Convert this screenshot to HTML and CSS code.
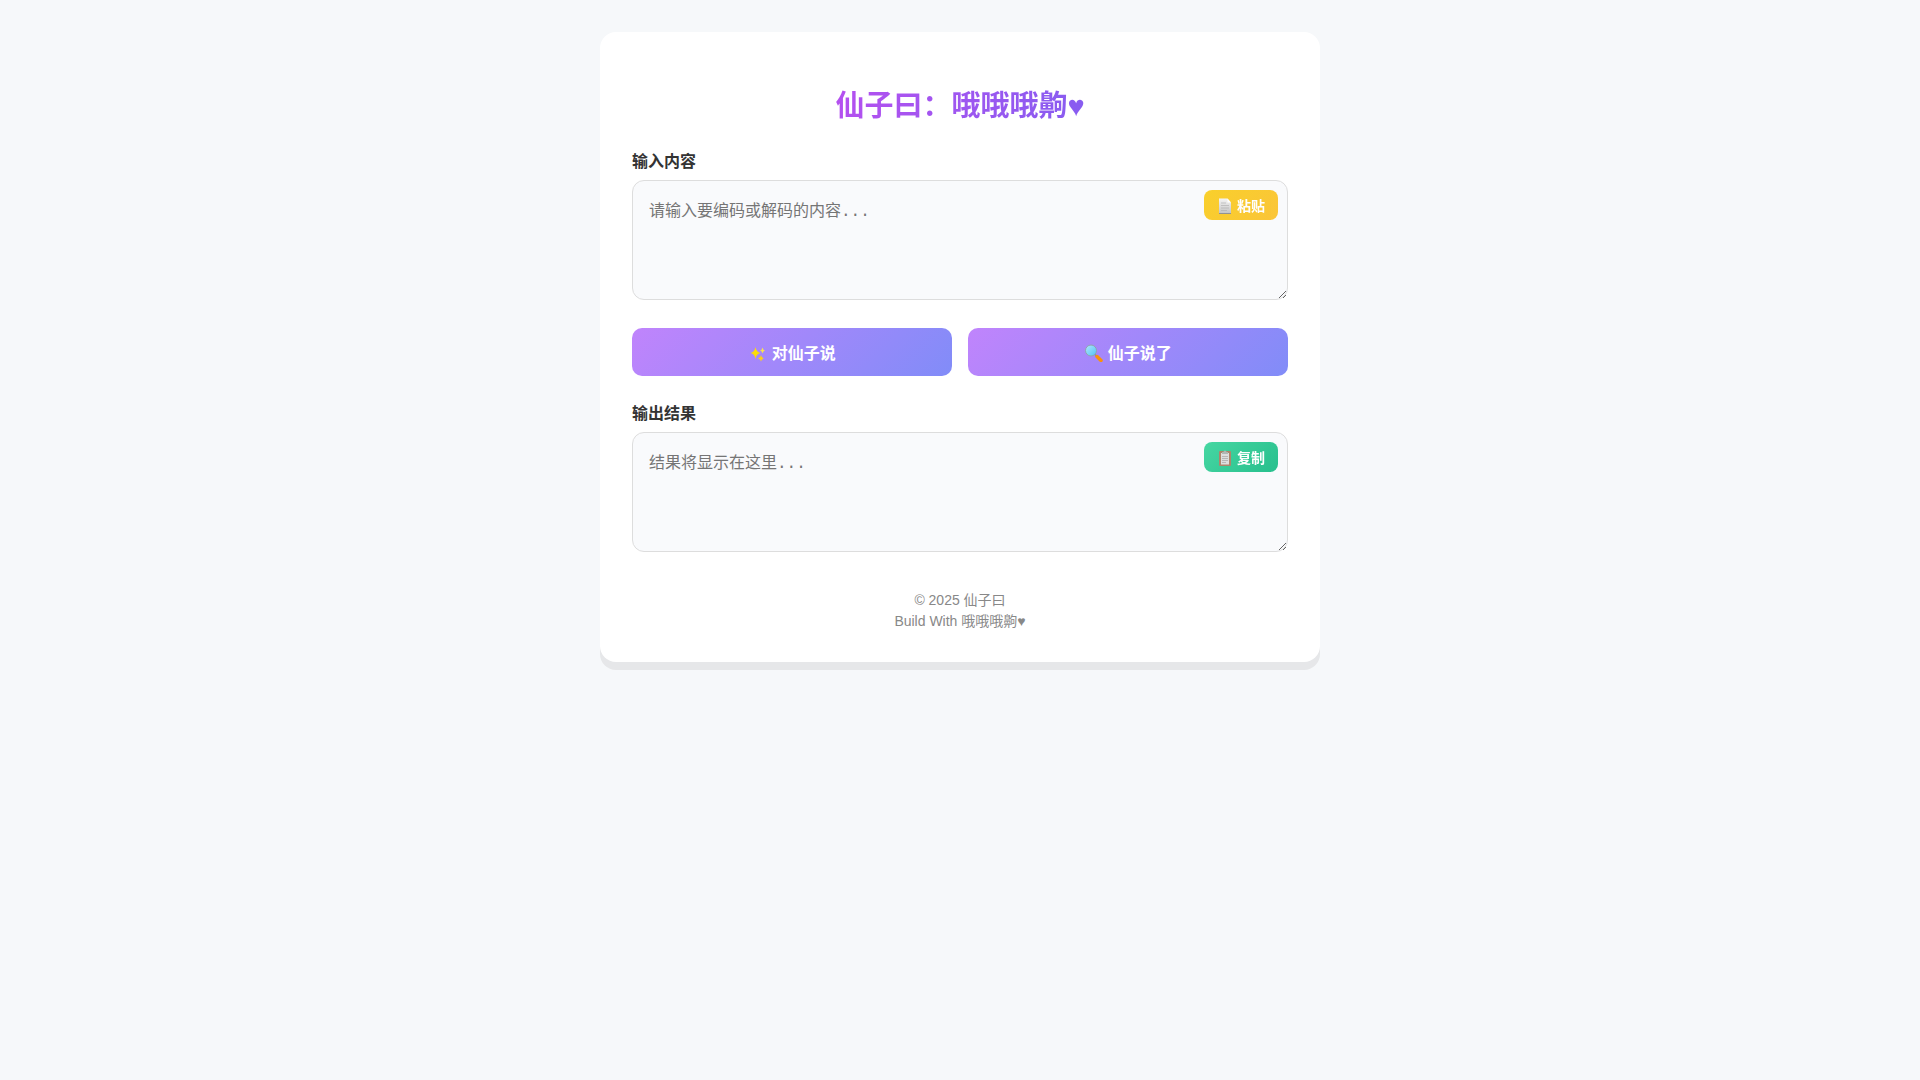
FILE: index.html
```
<!DOCTYPE html>
<html lang="zh-CN">
<head>
    <meta charset="UTF-8">
    <meta name="viewport" content="width=device-width, initial-scale=1.0">
    <title>仙子曰</title>
    <link rel="stylesheet" href="styles.css">
</head>
<body>
    <div class="container">
        <h1>仙子曰：哦哦哦齁♥</h1>

        <label for="inputText">输入内容</label>
        <div class="textarea-wrapper">
            <textarea id="inputText" placeholder="请输入要编码或解码的内容..."></textarea>
            <button class="small-btn paste-btn" type="button">
                <svg class="icon" viewBox="0 0 16 18" aria-hidden="true">
                    <defs>
                        <linearGradient id="page" x1="0" y1="0" x2="0" y2="1">
                            <stop offset="0" stop-color="#f5f5f5"/>
                            <stop offset="1" stop-color="#bdbdbd"/>
                        </linearGradient>
                    </defs>
                    <path d="M2 1.5h8.5l3.5 4V17H2z" fill="url(#page)"/>
                    <path d="M10.5 1.5v4H14z" fill="#fff"/>
                    <path d="M4 6h5M4 8.5h8M4 11h8M4 13.5h6" stroke="#aaa" stroke-width=".7"/>
                    <path d="M2 16.5h12" stroke="#888"/>
                </svg>
                粘贴
            </button>
        </div>

        <div class="button-group">
            <button class="main-btn" type="button">
                <svg class="icon" viewBox="0 0 18 18" aria-hidden="true">
                    <path d="M7 3q.7 5 5 6-4.3 1-5 6-.7-5-5-6 4.3-1 5-6z" fill="#fbdc08"/>
                    <path d="M14 3.5q.5 2.5 2.5 3-2 .5-2.5 3-.5-2.5-2.5-3 2-.5 2.5-3z" fill="#fce34b"/>
                    <path d="M12.5 11q.5 3 3 3.5-2.5.5-3 3-.5-2.5-3-3 2.5-.5 3-3.5z" fill="#f9cf20"/>
                </svg>
                对仙子说
            </button>
            <button class="main-btn" type="button">
                <svg class="icon" viewBox="0 0 18 18" aria-hidden="true">
                    <defs>
                        <linearGradient id="lens" x1="0" y1="0" x2="1" y2="1">
                            <stop offset="0" stop-color="#b3e5fc"/>
                            <stop offset="1" stop-color="#4fc3f7"/>
                        </linearGradient>
                    </defs>
                    <path d="M10.5 10.5l2 2" stroke="#78909c" stroke-width="1.5"/>
                    <path d="M12.5 12.5l4 4" stroke="#f9920a" stroke-width="3.5" stroke-linecap="round"/>
                    <circle cx="6.5" cy="6.5" r="5.5" fill="url(#lens)" stroke="#90a4ae"/>
                </svg>
                仙子说了
            </button>
        </div>

        <label for="outputText">输出结果</label>
        <div class="textarea-wrapper">
            <textarea id="outputText" placeholder="结果将显示在这里..." readonly></textarea>
            <button class="small-btn copy-btn" type="button">
                <svg class="icon" viewBox="0 0 16 18" aria-hidden="true">
                    <rect x="2" y="2" width="12" height="15" rx="1" fill="#a5795c"/>
                    <path d="M4 4h8v11.5H4z" fill="#dcdcdc"/>
                    <path d="M5 7.5h6M5 9.5h6M5 11.5h6M5 13.5h4" stroke="#a5a5a5" stroke-width=".8"/>
                    <path d="M5 5V3h1.5a1.5 1.5 0 0 1 3 0H11v2z" fill="#a9b0ae"/>
                </svg>
                复制
            </button>
        </div>

        <footer>
            © 2025 仙子曰<br>
            Build With 哦哦哦齁♥
        </footer>
    </div>
</body>
</html>
```
FILE: styles.css
```
* {
    box-sizing: border-box;
}
body {
    margin: 0;
    padding: 32px 16px;
    font-family: "Liberation Sans", "Noto Sans CJK SC", sans-serif;
    background: #f6f8fa;
    color: #333;
}
.container {
    max-width: 720px;
    margin: 0 auto;
    padding: 32px 32px 30px;
    background: #fff;
    border-radius: 16px;
    box-shadow: 0 8px 0 #e6e7e9;
}
h1 {
    margin: 21px 0 24px;
    font-size: 29px;
    line-height: 42px;
    text-align: center;
    background: linear-gradient(90deg, #d946ef, #6366f1);
    -webkit-background-clip: text;
    background-clip: text;
    color: transparent;
}
label {
    display: block;
    margin-bottom: 7px;
    font-size: 16px;
    line-height: 22px;
    font-weight: bold;
}
.textarea-wrapper {
    position: relative;
    margin-bottom: 28px;
}
textarea {
    display: block;
    width: 100%;
    height: 120px;
    padding: 16px;
    font-family: "Liberation Mono", "Noto Sans CJK SC", monospace;
    font-size: 16px;
    border: 1px solid #ddd;
    border-radius: 12px;
    background: #f9fafc;
    resize: vertical;
}
.icon {
    width: 19px;
    height: 18px;
    vertical-align: -3px;
}
.small-btn {
    position: absolute;
    top: 10px;
    right: 10px;
    height: 30px;
    padding: 0 13px;
    font-family: inherit;
    font-size: 14px;
    font-weight: bold;
    color: #fff;
    border: none;
    border-radius: 8px;
    opacity: 0.9;
    cursor: pointer;
}
.small-btn .icon {
    width: 16px;
    vertical-align: -4px;
}
.paste-btn {
    background: linear-gradient(135deg, #facc15, #fbbf24);
}
.copy-btn {
    background: linear-gradient(135deg, #34d399, #10b981);
}
.button-group {
    display: flex;
    gap: 16px;
    margin-bottom: 27px;
}
.main-btn {
    flex: 1;
    height: 48px;
    font-family: inherit;
    font-size: 16px;
    font-weight: bold;
    color: #fff;
    border: none;
    border-radius: 10px;
    background: linear-gradient(135deg, #c084fc, #818cf8);
    cursor: pointer;
}
footer {
    margin-top: 38px;
    font-size: 14px;
    line-height: 21px;
    text-align: center;
    color: #888;
}
```
